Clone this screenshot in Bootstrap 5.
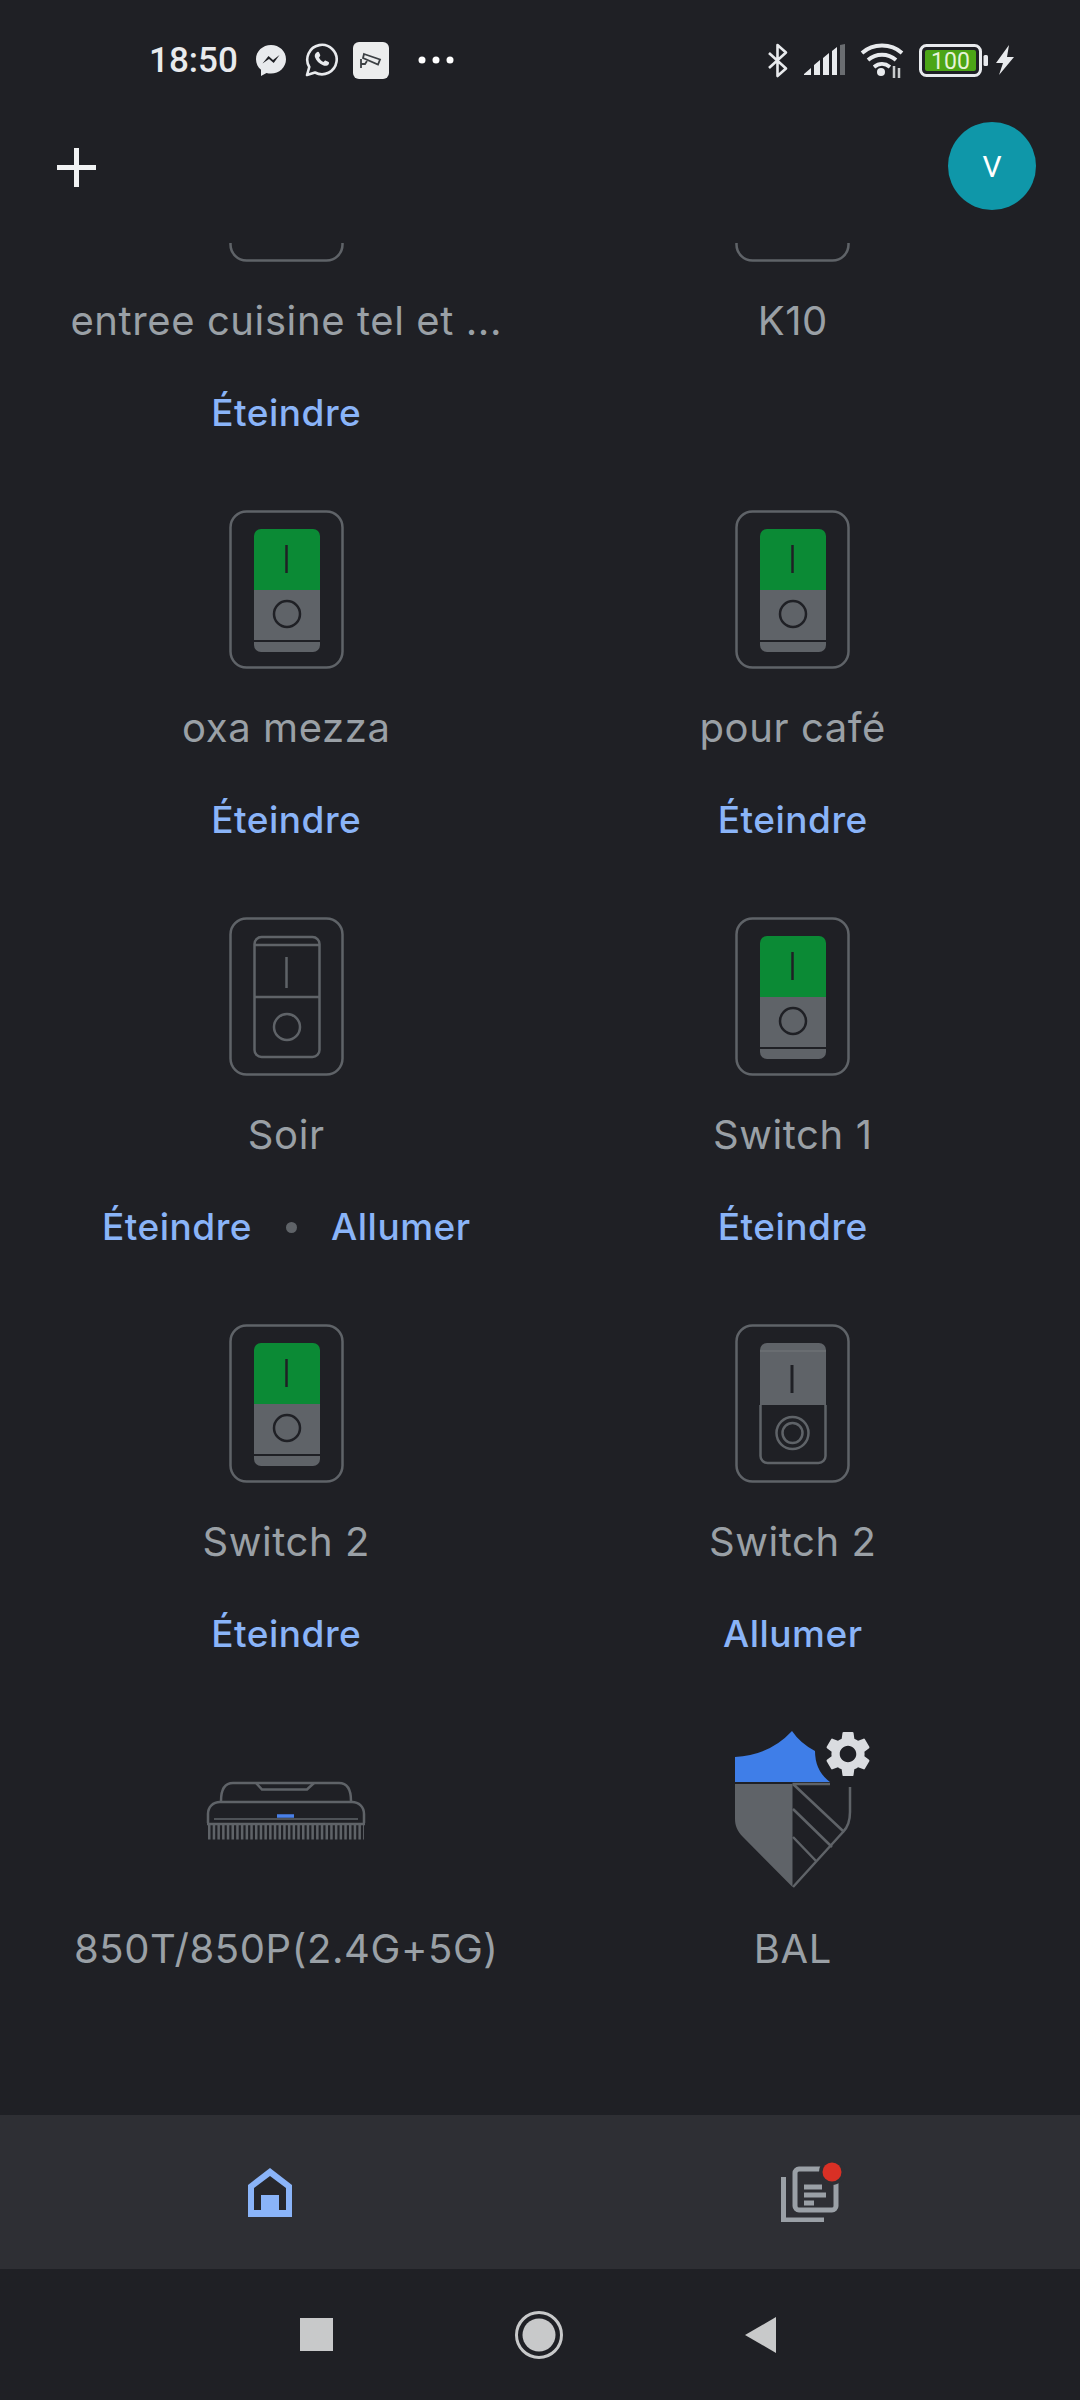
<!DOCTYPE html>
<html lang="fr">
<head>
  <meta charset="UTF-8">
  <meta name="viewport" content="width=device-width, initial-scale=1.0">
  <title>Home</title>
  <link href="https://cdn.jsdelivr.net/npm/bootstrap@5.3.0/dist/css/bootstrap.min.css" rel="stylesheet">
  <style>
    body {
      background: #1f2025;
      font-family: "Inter", "Liberation Sans", sans-serif;
    }

    /* status bar */
    .status-bar { height: 120px; padding: 0 65px 0 149px; flex-shrink: 0; }
    .status-time { font-family: "Roboto", sans-serif; font-weight: 500; font-size: 35px; color: #e8eaed; width: 88px; line-height: 1; margin-right: 19px; }
    .st-left { gap: 19px; }
    .st-cam { margin-left: -4px; }
    .st-dots { margin-left: 10px; }
    .st-right { gap: 15px; }
    .st-bolt { margin-left: -8px; }

    /* app bar */
    .app-bar { height: 123px; padding: 2px 44px 0 57px; flex-shrink: 0; }
    .plus-icon { margin-top: 26px; }
    .avatar-v { width: 88px; height: 88px; background: #0f97a9; color: #fff; font-family: "Roboto", sans-serif; font-size: 30px; }

    /* device grid */
    .grid-scroll { padding: 0 34px 0 33px; min-height: 0; }
    .tile { height: 407px; text-align: center; }
    .icon-box { height: 159px; }
    .tile-cut { height: 267px; }
    .tile-cut .icon-box { height: 19px; overflow: hidden; align-items: flex-end; }
    .tile-label { margin-top: 35px; height: 48px; line-height: 48px; font-size: 40px; letter-spacing: .6px; color: #9aa0a6; white-space: nowrap; }
    .tile-actions { margin-top: 44px; height: 48px; line-height: 48px; font-size: 37px; letter-spacing: .5px; font-weight: 500; color: #8ab4f8; gap: 34px; }
    .act-dot { width: 11px; height: 11px; background: #5f6368; }

    /* bottom */
    .tab-bar { height: 154px; background: #2e2f34; flex-shrink: 0; }
    .tab-slot { width: 50%; }
    .docs-icon { margin-left: 6px; }
    .nav-bar { height: 131px; padding: 0 304px 0 300px; flex-shrink: 0; }
  </style>
</head>
<body class="vh-100 d-flex flex-column overflow-hidden">

  <!-- shared icons -->
  <svg width="0" height="0" class="d-block">
    <symbol id="sw-frame" viewBox="0 0 115 159">
      <rect x="1.5" y="1.5" width="112" height="156" rx="16" fill="none" stroke="#5f6368" stroke-width="2.5"/>
    </symbol>
    <symbol id="sw-on" viewBox="0 0 115 159">
      <rect x="1.5" y="1.5" width="112" height="156" rx="16" fill="none" stroke="#5f6368" stroke-width="2.5"/>
      <path d="M25 80V26a7 7 0 0 1 7-7h52a7 7 0 0 1 7 7v54z" fill="#0b8a35"/>
      <path d="M25 80h66v55a7 7 0 0 1-7 7H32a7 7 0 0 1-7-7z" fill="#5f6368"/>
      <path d="M25 131h66" stroke="#1f2025" stroke-width="2"/>
      <path d="M57.500 35v28" stroke="#1f2025" stroke-width="2.500"/>
      <circle cx="58" cy="104" r="13" fill="none" stroke="#1f2025" stroke-width="2.500"/>
    </symbol>
    <symbol id="sw-off" viewBox="0 0 115 159">
      <rect x="1.5" y="1.5" width="112" height="156" rx="16" fill="none" stroke="#5f6368" stroke-width="2.5"/>
      <rect x="25.500" y="20" width="65" height="120" rx="7" fill="none" stroke="#5f6368" stroke-width="2.500"/>
      <path d="M25 28h66M25 80h66M57.500 40v31" stroke="#5f6368" stroke-width="2.500" fill="none"/>
      <circle cx="58" cy="110" r="13" fill="none" stroke="#5f6368" stroke-width="2.500"/>
    </symbol>
    <symbol id="sw-alt" viewBox="0 0 115 159">
      <rect x="1.5" y="1.5" width="112" height="156" rx="16" fill="none" stroke="#5f6368" stroke-width="2.5"/>
      <path d="M25 81V26a7 7 0 0 1 7-7h52a7 7 0 0 1 7 7v55z" fill="#5f6368"/>
      <path d="M25.500 81v51a7 7 0 0 0 7 7h51a7 7 0 0 0 7-7V81" fill="none" stroke="#5f6368" stroke-width="2.500"/>
      <path d="M25 27h66" stroke="#6d7175" stroke-width="1.500"/>
      <path d="M57 41v28" stroke="#1f2025" stroke-width="3"/>
      <circle cx="57.500" cy="109" r="16" fill="none" stroke="#5f6368" stroke-width="2.500"/>
      <circle cx="57.500" cy="109" r="10" fill="none" stroke="#5f6368" stroke-width="2.500"/>
    </symbol>
  </svg>

  <!-- status bar -->
  <div class="status-bar d-flex align-items-center justify-content-between">
    <div class="d-flex align-items-center">
      <span class="status-time">18:50</span>
      <div class="st-left d-flex align-items-center">
        <svg width="30" height="31" viewBox="0 0 30 31">
          <path d="M15 0C6.700 0 0 6.200 0 14.200c0 4.300 1.900 8 5 10.600V31l5.500-3.100c1.400.4 2.900.6 4.500.6 8.300 0 15-6.300 15-14.300S23.300 0 15 0z" fill="#e8eaed"/>
          <path d="M6.500 18.500l6-7.500 4.500 4 6.500-5-5.800 8-4.700-4z" fill="#1f2025"/>
        </svg>
        <svg width="33" height="34" viewBox="0 0 33 34">
          <path d="M2 32l2.300-8A14.700 14.700 0 1 1 10 29.500z" fill="none" stroke="#e8eaed" stroke-width="2.600" stroke-linejoin="round"/>
          <path d="M11.500 9.500c1.200-1 2.200-.8 2.700.3l1 2.300c.2.600 0 1.100-.4 1.500l-.8.900c1 2 2.400 3.500 4.500 4.500l1-1c.4-.4.900-.5 1.400-.3l2.300 1.100c1 .5 1.200 1.500.3 2.600-1.300 1.600-3.300 1.800-5.500.9-4-1.600-6.700-4.400-8-8-.6-1.900-.1-3.500 1.500-4.800z" fill="#e8eaed"/>
        </svg>
        <svg class="st-cam" width="36" height="37" viewBox="0 0 36 37">
          <rect width="36" height="37" rx="6" fill="#eceded"/>
          <path d="M11 12l16 5.500-2 5-15-6.500z" fill="none" stroke="#3c4043" stroke-width="1.800"/>
          <path d="M8 17v9M8 22h4l2-3" fill="none" stroke="#3c4043" stroke-width="1.800"/>
        </svg>
        <svg class="st-dots" width="36" height="8" viewBox="0 0 36 8">
          <circle cx="4" cy="4" r="3.500" fill="#fff"/><circle cx="18" cy="4" r="3.500" fill="#fff"/><circle cx="32" cy="4" r="3.500" fill="#fff"/>
        </svg>
      </div>
    </div>
    <div class="st-right d-flex align-items-center">
      <svg width="22" height="35" viewBox="0 0 22 35">
        <path d="M2 10l17 15.500L10.500 33V2L19 9.500 2 25" fill="none" stroke="#e8eaed" stroke-width="2.600" stroke-linejoin="round"/>
      </svg>
      <svg width="41" height="32" viewBox="0 0 41 32">
        <path d="M0 30l7-6v7H0zM10 21l6-5v15h-6zM19 14l6-5v22h-6zM28 7l5-4v28h-5z" fill="#e8eaed"/>
        <path d="M36 1l5-1v31h-5z" fill="#6a6d71"/>
      </svg>
      <svg width="44" height="36" viewBox="0 0 44 36">
        <path d="M2 11c11-10 29-10 40 0M8 18c8-7 20-7 28 0M14 25c5-4 11-4 16 0" fill="none" stroke="#e8eaed" stroke-width="3.800"/>
        <circle cx="21" cy="30" r="4" fill="#e8eaed"/>
        <path d="M34 24v12M39 26v10" stroke="#c8cacc" stroke-width="2.500"/>
      </svg>
      <svg width="69" height="33" viewBox="0 0 69 33">
        <rect x="1.500" y="1.500" width="60" height="30" rx="6" fill="#1f2025" stroke="#e8eaed" stroke-width="3"/>
        <rect x="6" y="6" width="51" height="21" rx="2" fill="#4ca516"/>
        <text x="31.500" y="24.500" text-anchor="middle" font-family="Roboto, sans-serif" font-size="23" fill="#e6f2d8">100</text>
        <rect x="64.500" y="11" width="4.500" height="11" rx="1.500" fill="#e8eaed"/>
      </svg>
      <svg class="st-bolt" width="20" height="30" viewBox="0 0 20 30">
        <path d="M14 0L1 18h7l-4 12 15-18h-7z" fill="#e8eaed"/>
      </svg>
    </div>
  </div>

  <!-- app bar -->
  <div class="app-bar d-flex justify-content-between align-items-start">
    <svg class="plus-icon" width="39" height="39" viewBox="0 0 39 39">
      <path d="M19.500 0v39M0 19.500h39" stroke="#f1f3f4" stroke-width="5"/>
    </svg>
    <div class="avatar-v rounded-circle d-flex align-items-center justify-content-center">V</div>
  </div>

  <!-- device grid -->
  <div class="grid-scroll flex-grow-1 overflow-hidden">
    <div class="row row-cols-2 g-0">
      <div class="col tile tile-cut">
        <div class="icon-box d-flex justify-content-center"><svg class="flex-shrink-0" width="115" height="159"><use href="#sw-frame"/></svg></div>
        <div class="tile-label">entree cuisine tel et ...</div>
        <div class="tile-actions d-flex justify-content-center align-items-center">Éteindre</div>
      </div>
      <div class="col tile tile-cut">
        <div class="icon-box d-flex justify-content-center"><svg class="flex-shrink-0" width="115" height="159"><use href="#sw-frame"/></svg></div>
        <div class="tile-label">K10</div>
      </div>

      <div class="col tile">
        <div class="icon-box d-flex justify-content-center"><svg width="115" height="159"><use href="#sw-on"/></svg></div>
        <div class="tile-label">oxa mezza</div>
        <div class="tile-actions d-flex justify-content-center align-items-center">Éteindre</div>
      </div>
      <div class="col tile">
        <div class="icon-box d-flex justify-content-center"><svg width="115" height="159"><use href="#sw-on"/></svg></div>
        <div class="tile-label">pour café</div>
        <div class="tile-actions d-flex justify-content-center align-items-center">Éteindre</div>
      </div>

      <div class="col tile">
        <div class="icon-box d-flex justify-content-center"><svg width="115" height="159"><use href="#sw-off"/></svg></div>
        <div class="tile-label">Soir</div>
        <div class="tile-actions d-flex justify-content-center align-items-center">
          <span>Éteindre</span><span class="act-dot rounded-circle"></span><span>Allumer</span>
        </div>
      </div>
      <div class="col tile">
        <div class="icon-box d-flex justify-content-center"><svg width="115" height="159"><use href="#sw-on"/></svg></div>
        <div class="tile-label">Switch 1</div>
        <div class="tile-actions d-flex justify-content-center align-items-center">Éteindre</div>
      </div>

      <div class="col tile">
        <div class="icon-box d-flex justify-content-center"><svg width="115" height="159"><use href="#sw-on"/></svg></div>
        <div class="tile-label">Switch 2</div>
        <div class="tile-actions d-flex justify-content-center align-items-center">Éteindre</div>
      </div>
      <div class="col tile">
        <div class="icon-box d-flex justify-content-center"><svg width="115" height="159"><use href="#sw-alt"/></svg></div>
        <div class="tile-label">Switch 2</div>
        <div class="tile-actions d-flex justify-content-center align-items-center">Allumer</div>
      </div>

      <div class="col tile">
        <div class="icon-box d-flex justify-content-center align-items-center">
          <svg width="160" height="60" viewBox="0 0 160 60">
            <g fill="none" stroke="#5f6368" stroke-width="2.500">
              <path d="M15 20C15 8 19 2 27 2h106c8 0 12 6 12 18"/>
              <path d="M50 2l6 6.500h45L108 2"/>
              <path d="M2 42V33C2 26 7 21 14 21h132c7 0 12 5 12 12v9"/>
              <path d="M8 38h144" stroke-width="1.500"/>
              <path d="M1 43h158"/>
              <path d="M2 51h156" stroke-width="15" stroke-dasharray="2.500 2.200"/>
            </g>
            <path d="M71 35h17" stroke="#4a80e8" stroke-width="3.500"/>
          </svg>
        </div>
        <div class="tile-label">850T/850P(2.4G+5G)</div>
      </div>
      <div class="col tile">
        <div class="icon-box d-flex justify-content-center">
          <svg width="165" height="159" viewBox="-25 0 165 159">
            <path d="M0 53h57.500v103L8 106C2 100 0 94 0 88z" fill="#5f6368"/>
            <path d="M57.500 53H95M115 56v25c0 8-2 15-7 20l-50 55M58 53l50 47M58 78l39 38M58 106l24 25" fill="none" stroke="#5f6368" stroke-width="2.500"/>
            <path d="M0 26Q35 24 57 0 65 12 80 20q0 20 15 31H0z" fill="#3f7ee8"/>
            <g transform="translate(85.400 -4.600) scale(2.300)">
              <path d="M19.140 12.940c.04-.3.06-.61.06-.94 0-.32-.02-.64-.07-.94l2.030-1.580c.18-.14.23-.41.12-.61l-1.920-3.320c-.12-.22-.37-.29-.59-.22l-2.390.96c-.5-.38-1.030-.7-1.620-.94l-.36-2.540c-.04-.24-.24-.41-.48-.41h-3.840c-.24 0-.43.17-.47.41l-.36 2.540c-.59.24-1.130.57-1.620.94l-2.390-.96c-.22-.08-.47 0-.59.22L2.740 8.870c-.12.21-.08.47.12.61l2.030 1.580c-.05.3-.09.63-.09.94s.02.64.07.94l-2.030 1.580c-.18.14-.23.41-.12.61l1.920 3.320c.12.22.37.29.59.22l2.390-.96c.5.38 1.030.7 1.620.94l.36 2.540c.05.24.24.41.48.41h3.840c.24 0 .44-.17.47-.41l.36-2.540c.59-.24 1.130-.56 1.620-.94l2.390.96c.22.08.47 0 .59-.22l1.920-3.320c.12-.22.07-.47-.12-.61l-2.010-1.580zM12 15.600c-1.980 0-3.600-1.620-3.600-3.600s1.620-3.600 3.600-3.600 3.600 1.620 3.600 3.600-1.620 3.600-3.600 3.600z" fill="#dadce0"/>
            </g>
          </svg>
        </div>
        <div class="tile-label">BAL</div>
      </div>
    </div>
  </div>

  <!-- tab bar -->
  <div class="tab-bar d-flex">
    <div class="tab-slot d-flex justify-content-center align-items-center">
      <svg width="44" height="49" viewBox="0 0 44 49">
        <path d="M22 0l22 17v32H0V17z" fill="#8ab4f8"/>
        <path d="M6 42V20L22 8l16 12v22h-7V27H13v15z" fill="#26272b"/>
      </svg>
    </div>
    <div class="tab-slot d-flex justify-content-center align-items-center">
      <svg class="docs-icon" width="64" height="60" viewBox="0 0 64 60">
        <g fill="none" stroke="#9aa0a6" stroke-width="5">
          <rect x="14" y="7" width="41" height="41" rx="4"/>
          <path d="M2.500 15v43H43"/>
          <path d="M23 25h18M23 33h22M23 41h10"/>
        </g>
        <circle cx="51" cy="10" r="13" fill="#2e2f34"/>
        <circle cx="51" cy="10" r="9.500" fill="#d93025"/>
      </svg>
    </div>
  </div>

  <!-- android nav -->
  <div class="nav-bar d-flex justify-content-between align-items-center">
    <svg width="33" height="33" viewBox="0 0 33 33"><rect width="33" height="33" fill="#c8c9ca"/></svg>
    <svg width="48" height="48" viewBox="0 0 48 48">
      <circle cx="24" cy="24" r="22.500" fill="none" stroke="#c8c9ca" stroke-width="3"/>
      <circle cx="24" cy="24" r="16.500" fill="#c8c9ca"/>
    </svg>
    <svg width="32" height="36" viewBox="0 0 32 36"><path d="M32 0v36L1 18z" fill="#c8c9ca"/></svg>
  </div>

</body>
</html>
